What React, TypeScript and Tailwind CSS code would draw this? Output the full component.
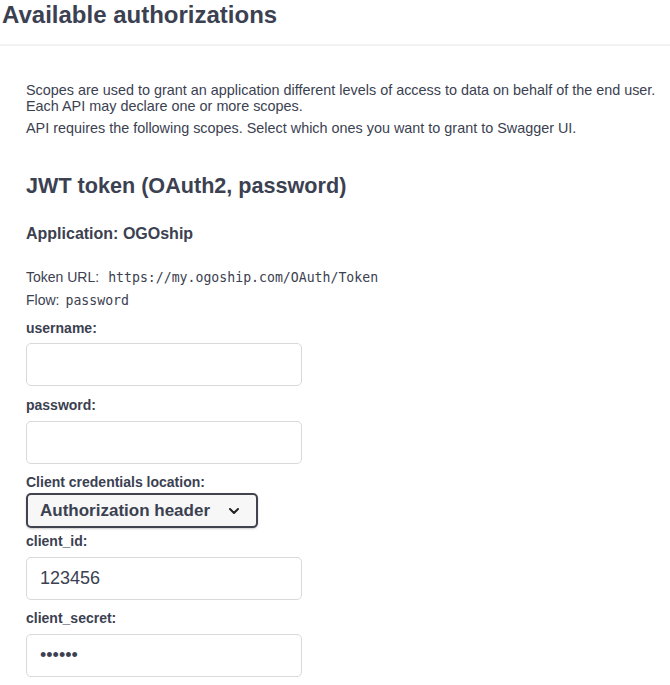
import { ChevronDown } from "lucide-react";

const sans = { fontFamily: '"Liberation Sans", Arial, sans-serif' };
const mono = { fontFamily: '"DejaVu Sans Mono", monospace' };

const Label = ({ text }: { text: string }) => (
  <label className="block text-[14px] font-bold leading-4 text-[#3b4151]">{text}</label>
);

const Field = ({ value, type = "text" }: { value?: string; type?: string }) => (
  <input
    type={type}
    defaultValue={value}
    className="block w-[276px] h-[43px] rounded-[5px] border border-[#d9d9d9] bg-white px-[13px] text-[18px] text-[#3b4151] outline-none"
    style={sans}
  />
);

const App = () => {
  return (
    <div className="min-h-screen bg-white text-[#3b4151]" style={sans}>
      {/* Header */}
      <div className="h-[46px] border-b-2 border-[#f2f2f2] pl-[2px] pt-[1px]">
        <h3 className="text-[24px] font-bold leading-7">Available authorizations</h3>
      </div>

      <div className="px-[26px]">
        {/* Scopes */}
        <div className="pt-[36px] text-[14.4px] leading-4 whitespace-nowrap">
          <p>
            Scopes are used to grant an application different levels of access to data on behalf of the end user.
            <br />
            Each API may declare one or more scopes.
          </p>
          <p className="mt-[6px]">API requires the following scopes. Select which ones you want to grant to Swagger UI.</p>
        </div>

        <h4 className="mt-[36px] text-[21.6px] font-bold leading-7">JWT token (OAuth2, password)</h4>

        <h5 className="mt-[24px] text-[16px] font-bold leading-5">Application: OGOship</h5>

        <div className="mt-[22px] text-[14px] leading-[22px]">
          <p>
            Token URL:
            <code className="ml-[9px] text-[13.2px]" style={mono}>
              https://my.ogoship.com/OAuth/Token
            </code>
          </p>
          <p>
            Flow:
            <code className="ml-[6px] text-[13.2px]" style={mono}>
              password
            </code>
          </p>
        </div>

        <div className="mt-[8px] flex flex-col">
          <Label text="username:" />
          <div className="mt-[7px]">
            <Field />
          </div>
          <div className="mt-[11px]">
            <Label text="password:" />
          </div>
          <div className="mt-[8px]">
            <Field type="password" />
          </div>
          <div className="mt-[10px]">
            <Label text="Client credentials location:" />
          </div>
          <div className="mt-[3px]">
            <div className="flex h-[35px] w-[232px] items-center justify-between rounded-[5px] border-2 border-[#41444e] bg-[#f7f7f7] pl-[12px] pr-[14px] shadow-[0_1px_2px_rgba(0,0,0,0.2)]">
              <span className="text-[17px] font-bold">Authorization header</span>
              <ChevronDown size={16} strokeWidth={3} className="text-[#222]" />
            </div>
          </div>
          <div className="mt-[5px]">
            <Label text="client_id:" />
          </div>
          <div className="mt-[8px]">
            <Field value="123456" />
          </div>
          <div className="mt-[10px]">
            <Label text="client_secret:" />
          </div>
          <div className="mt-[8px]">
            <Field type="password" value="123456" />
          </div>
        </div>
      </div>
    </div>
  );
};

export default App;
